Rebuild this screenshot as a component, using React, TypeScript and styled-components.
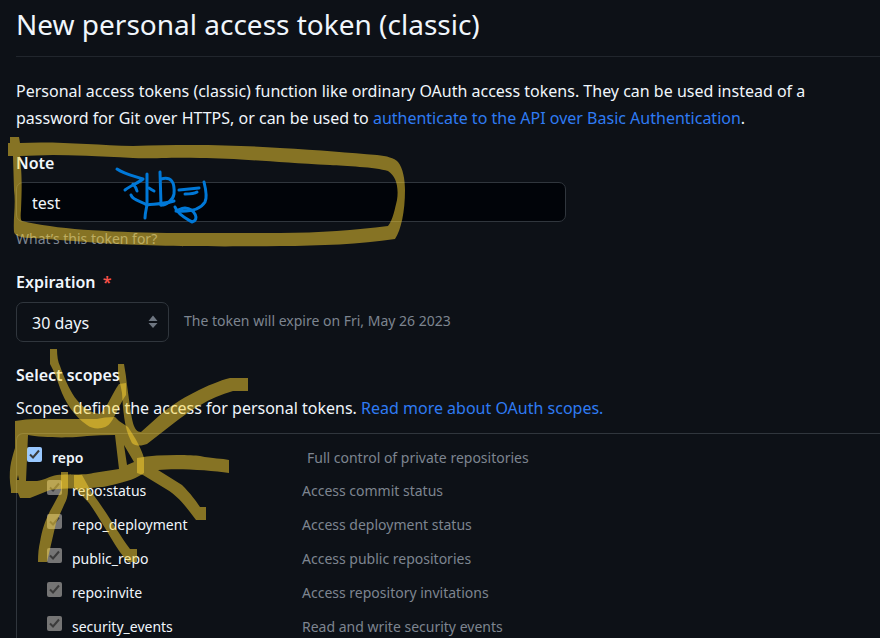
import React from "react";
import styled, { createGlobalStyle } from "styled-components";

const GlobalStyle = createGlobalStyle`
  *, *::before, *::after { box-sizing: border-box; }
  html { background: #0d1117; }
  body {
    margin: 0;
    background: #0d1117;
    color: #f0f6fc;
    font-family: "Noto Sans", "Open Sans", sans-serif;
    font-size: 16px;
    line-height: 27px;
    overflow: hidden;
  }
`;

const Page = styled.main`
  position: relative;
  display: flex;
  flex-direction: column;
  padding: 3px 0 0 16px;
`;

const Title = styled.h1`
  margin: 0;
  padding-bottom: 11px;
  border-bottom: 1px solid #21262d;
  font-size: 28px;
  font-weight: 400;
  line-height: 42px;
`;

const Intro = styled.p`
  margin: 21px 40px 0 0;
`;

const Link = styled.a`
  color: #2f7bf3;
  text-decoration: none;
`;

const Field = styled.div`
  display: flex;
  flex-direction: column;
  align-items: flex-start;
  margin-top: 18px;
`;

const Label = styled.label`
  font-weight: 600;
`;

const Required = styled.span`
  color: #f85149;
  margin-left: 3px;
`;

const NoteInput = styled.input`
  width: 550px;
  max-width: 100%;
  height: 40px;
  margin-top: 5px;
  padding: 2px 15px 0;
  color: #f0f6fc;
  background: #010409;
  border: 1px solid #30363d;
  border-radius: 7px;
  font: inherit;
`;

const Hint = styled.p`
  margin: 0;
  color: #7d8590;
  font-size: 14px;
  line-height: 22px;
`;

const NoteHint = styled(Hint)`
  margin-top: 6px;
`;

const ExpirationField = styled(Field)`
  margin-top: 19px;
`;

const ExpirationRow = styled.div`
  display: flex;
  gap: 15px;
  margin-top: 6px;
`;

const SelectWrap = styled.div`
  position: relative;
  width: 153px;
`;

const Select = styled.select`
  appearance: none;
  width: 100%;
  height: 40px;
  padding: 2px 15px 0;
  color: #f0f6fc;
  background: #0d1117;
  border: 1px solid #30363d;
  border-radius: 7px;
  font: inherit;
`;

const SelectArrows = styled.svg`
  position: absolute;
  right: 11px;
  top: 13px;
  pointer-events: none;
`;

const ExpirationHint = styled(Hint)`
  padding-top: 8px;
`;

const Heading = styled.h2`
  margin: 20px 0 0;
  font-size: 16px;
  font-weight: 600;
  line-height: 27px;
`;

const ScopesText = styled.p`
  margin: 6px 0 0;
`;

const ScopeList = styled.ul`
  list-style: none;
  margin: 11px 0 0;
  padding: 7px 0 0;
  border: 1px solid #30363d;
  border-width: 1px 0 0 1px;
  border-radius: 7px 0 0 0;
`;

const ScopeRow = styled.li<{ $parent?: boolean }>`
  display: flex;
  align-items: center;
  height: ${(p) => (p.$parent ? 32 : 34)}px;
  padding-left: ${(p) => (p.$parent ? 10 : 30)}px;
  font-size: 14px;
  font-weight: ${(p) => (p.$parent ? 600 : 400)};
`;

const ScopeLabel = styled.label<{ $parent?: boolean }>`
  display: flex;
  align-items: center;
  gap: 10px;
  width: ${(p) => (p.$parent ? 280 : 255)}px;
`;

const Check = styled.input`
  appearance: none;
  width: 15px;
  height: 15px;
  margin: 0 0 6px;
  border-radius: 2px;
  background: #99c8ff;
  &:disabled { background: #757575; }
`;

const CheckCell = styled.span`
  position: relative;
  display: flex;
  svg { position: absolute; left: 0; top: 0; pointer-events: none; }
`;

const Description = styled.span`
  color: #7d8590;
  font-weight: 400;
`;

const Ink = styled.svg`
  position: absolute;
  left: 0;
  top: 0;
  pointer-events: none;
`;

const scopes = [
  { name: "repo", text: "Full control of private repositories", parent: true },
  { name: "repo:status", text: "Access commit status" },
  { name: "repo_deployment", text: "Access deployment status" },
  { name: "public_repo", text: "Access public repositories" },
  { name: "repo:invite", text: "Access repository invitations" },
  { name: "security_events", text: "Read and write security events" },
];

const markerStrokes = [
  "M10 137H19L20 143C55 141 95 145 133 146C190 144 240 145 280 148C320 150 350 153 377 155C387 156 394 158 398 162C403 168 405 180 405 190C405 212 401 230 395 239C360 244 320 246 280 246C200 247 150 246 100 243L33 238C22 238 15 236 14 232C13 218 16 205 14 190L13 156H8V143H10ZM20 156C22 176 22 186 21 210Q20 220 22 221C55 229 105 232 167 233H280C320 233 355 230 388 226C393 220 395 208 397 200C399 187 396 176 388 171C375 167 345 166 330 165C270 162 235 158 200 158C170 157 150 159 133 158Q80 155 53 155Z",
  "M50 349H57Q57 360 60 366C68 388 78 411 100 414C108 406 112 394 119 384L126 383V395C120 403 115 417 111 422C106 430 93 430 87 425C74 416 65 402 60 388C57 379 54 371 50 364Z",
  "M118 364H124Q126 375 127 385L130 407C132 418 133 432 141 432L160 415C178 399 210 383 230 378H248V391H233C210 397 188 412 174 423L147 444C142 446 133 447 131 441C124 428 123 408 122 393Q120 382 118 377Z",
  "M15 421Q27 419 35 419H97Q104 417 115 417L119 421L128 427C135 437 142 450 144 458V473Q137 478 127 481C112 485 105 487 100 487C82 490 65 487 50 490L30 498H20L18 493H11V490C8 471 11 461 15 448ZM28 435L26 481H37C45 480 50 476 57 475C70 474 90 475 93 473L119 469L115 435Q100 435 87 436C75 438 42 438 28 435ZM124 445L134 462L127 465ZM18 475L19 480H17Z",
  "M137 458C160 454 190 455 200 456C213 459 222 458 229 460V473C210 470 176 468 158 470L182 485C191 494 196 501 200 507H206V520H196C188 510 181 498 166 489L143 475L137 473Z",
  "M61 472H68V490Q68 498 64 505L56 523L47 562H38Q38 550 40 542C42 530 45 521 50 511C55 502 59 495 61 490Z",
  "M74 475H82L92 493C106 511 118 533 130 549H137V562H128C115 548 104 524 89 503L74 487Z",
];

const penStrokes = [
  "M117 169C124 174 134 176 143 179C138 183 130 186 125 190",
  "M133 184Q136 187 137 191",
  "M147 174V203C147 208 145 212 145 218",
  "M149 188Q152 190 154 191",
  "M160 172L161 205",
  "M161 179C171 176 175 182 174 194C173 200 167 205 161 205",
  "M131 195C133 201 142 201 147 205C155 204 165 204 174 201",
  "M179 190L199 188",
  "M185 194Q194 194 197 192",
  "M204 182C206 190 207 198 205 202C200 210 188 212 176 211",
  "M175 207C178 215 187 219 192 222C200 220 195 209 185 208Q179 209 177 211",
];

export default function App() {
  return (
    <>
      <GlobalStyle />
      <Page>
        <Title>New personal access token (classic)</Title>
        <Intro>
          Personal access tokens (classic) function like ordinary OAuth access tokens. They can be used instead of a
          password for Git over HTTPS, or can be used to{" "}
          <Link href="#basic-auth">authenticate to the API over Basic Authentication</Link>.
        </Intro>
        <Field>
          <Label htmlFor="note">Note</Label>
          <NoteInput id="note" type="text" defaultValue="test" />
          <NoteHint>What’s this token for?</NoteHint>
        </Field>
        <ExpirationField>
          <Label htmlFor="expiration">
            Expiration <Required>*</Required>
          </Label>
          <ExpirationRow>
            <SelectWrap>
              <Select id="expiration" defaultValue="30">
                <option value="30">30 days</option>
                <option value="60">60 days</option>
              </Select>
              <SelectArrows width="10" height="14" viewBox="0 0 10 14" fill="#6e7681">
                <path d="M5 0.5L9.5 6H0.5ZM5 13L9.5 8H0.5Z" />
              </SelectArrows>
            </SelectWrap>
            <ExpirationHint>The token will expire on Fri, May 26 2023</ExpirationHint>
          </ExpirationRow>
        </ExpirationField>
        <Heading>Select scopes</Heading>
        <ScopesText>
          Scopes define the access for personal tokens. <Link href="#scopes">Read more about OAuth scopes.</Link>
        </ScopesText>
        <ScopeList>
          {scopes.map((s) => (
            <ScopeRow key={s.name} $parent={s.parent}>
              <ScopeLabel $parent={s.parent}>
                <CheckCell>
                  <Check type="checkbox" defaultChecked disabled={!s.parent} />
                  <svg width="15" height="15" viewBox="0 0 15 15" fill="none" stroke="#3b3b3b" strokeWidth="2">
                    <path d="M3 7.5L6 10.5L12 3.5" />
                  </svg>
                </CheckCell>
                {s.name}
              </ScopeLabel>
              <Description>{s.text}</Description>
            </ScopeRow>
          ))}
        </ScopeList>
        <Ink width="420" height="580" viewBox="0 0 420 580" aria-hidden="true">
          {markerStrokes.map((d) => (
            <path key={d} d={d} fill="#ffd532" fillOpacity="0.5" fillRule="evenodd" />
          ))}
          <g fill="none" stroke="#0078d7" strokeWidth="3" strokeLinecap="round" strokeLinejoin="round">
            {penStrokes.map((d) => (
              <path key={d} d={d} />
            ))}
          </g>
        </Ink>
      </Page>
    </>
  );
}
